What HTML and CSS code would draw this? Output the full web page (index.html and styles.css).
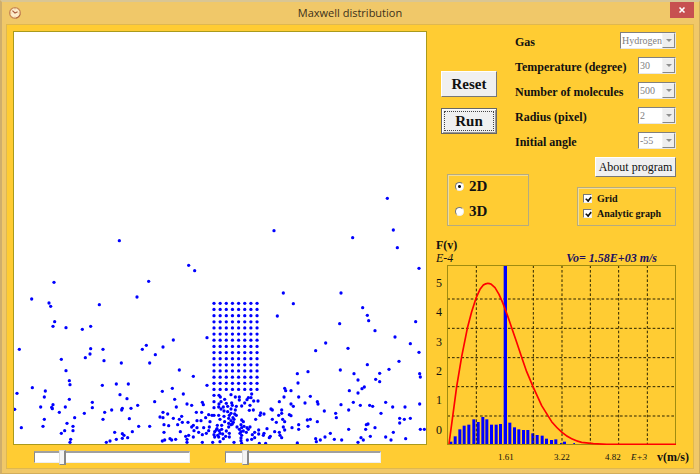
FILE: index.html
```html
<!DOCTYPE html>
<html lang="en">
<head>
<meta charset="utf-8">
<title>Maxwell distribution</title>
<link rel="stylesheet" href="styles.css">
</head>
<body>
<div class="window">
  <header class="titlebar">
    <svg class="app-icon" viewBox="0 0 14 14" aria-hidden="true">
      <circle cx="7" cy="7" r="5.4" fill="#fdeccb" stroke="#c98a55" stroke-width="1.3"/>
      <path d="M4.4 4.6 7 7l2.6-1.2" fill="none" stroke="#a85a3c" stroke-width="1.1"/>
      <path d="M7 2.3v1M7 10.7v1M2.3 7h1M10.7 7h1" stroke="#d09a60" stroke-width="1"/>
      <path d="M8 12.1a5.2 5.2 0 0 0 4-3.6" fill="none" stroke="#b0623c" stroke-width="1"/>
    </svg>
    <h1 class="title">Maxwell distribution</h1>
    <button class="close" type="button" aria-label="Close">
      <svg viewBox="0 0 8 8" aria-hidden="true"><path d="M1.5 1.5l5 5M6.5 1.5l-5 5" stroke="#fff" stroke-width="1.6"/></svg>
    </button>
  </header>

  <main class="content">
    <section class="simulation">
      <svg class="vessel" id="vessel" viewBox="42 96 1236 1236" role="img" aria-label="Molecules"></svg>
      <div class="sliders">
        <input type="range" min="0" max="100" value="16" aria-label="Speed">
        <input type="range" min="0" max="100" value="11" aria-label="Step">
      </div>
    </section>

    <section class="panel">
      <div class="settings">
        <div class="actions">
          <button class="btn btn-large" type="button">Reset</button>
          <button class="btn btn-large btn-default" type="button">Run</button>
        </div>
        <form class="params">
          <label for="gas">Gas</label>
          <span class="combo combo-wide"><select id="gas" disabled><option>Hydrogen</option></select><span class="arrow"></span></span>
          <label for="temp">Temperature (degree)</label>
          <span class="combo"><select id="temp" disabled><option>30</option></select><span class="arrow"></span></span>
          <label for="count">Number of molecules</label>
          <span class="combo"><select id="count" disabled><option>500</option></select><span class="arrow"></span></span>
          <label for="radius">Radius (pixel)</label>
          <span class="combo"><select id="radius" disabled><option>2</option></select><span class="arrow"></span></span>
          <label for="angle">Initial angle</label>
          <span class="combo"><select id="angle" disabled><option>-55</option></select><span class="arrow"></span></span>
        </form>
      </div>

      <div class="options">
        <div class="group modes">
          <label><input type="radio" name="mode" checked>2D</label>
          <label><input type="radio" name="mode">3D</label>
        </div>
        <div class="side">
          <button class="btn" type="button">About program</button>
          <div class="group checks">
            <label><input type="checkbox" checked>Grid</label>
            <label><input type="checkbox" checked>Analytic graph</label>
          </div>
        </div>
      </div>

      <div class="chart-head">
        <div class="axis-name"><b>F(v)</b><i>E-4</i></div>
        <div class="velocity">Vo= 1.58E+03 m/s</div>
      </div>
      <div class="chart">
        <div class="y-axis"><span>5</span><span>4</span><span>3</span><span>2</span><span>1</span><span>0</span></div>
        <svg class="plot" viewBox="51 15 687 540" role="img" aria-label="Velocity distribution">
          <g id="bars" fill="#00f"></g>
          <path d="M139 16V554M225 16V554M310 16V554M396 16V554M481 16V554M566 16V554M652 16V554M52 117H738M52 205H738M52 293H738M52 380H738M52 468H738" fill="none" stroke="#2b2300" stroke-width="3" stroke-dasharray="8 6"/>
          <rect x="221" y="17" width="10" height="537" fill="#00f"/>
          <rect x="52.5" y="16.5" width="684" height="537" fill="none" stroke="#a08c10" stroke-width="3"/>
          <path d="M57 552L68 470L80 380L95 290L112 205L125 155L139 112L150 88L160 75Q172 66 184 73L195 83L207 103L218 128L232 165L245 203L260 247L275 292L290 335L310 382L335 437L365 485Q380 503 396 517Q410 529 425 536Q440 543 455 547L490 551L530 553H738" fill="none" stroke="#f00" stroke-width="5" stroke-linejoin="round"/>
        </svg>
      </div>
      <div class="x-axis"><span>1.61</span><span>3.22</span><span>4.82</span><i>E+3</i><b>v(m/s)</b></div>
    </section>
  </main>
</div>
<script src="script.js"></script>
</body>
</html>
```
FILE: styles.css
```css
* { box-sizing: border-box; }

body {
  margin: 0;
  background: #eef0ee;
  color: #111;
  font: 12px/13px "Liberation Serif", serif;
}

.window {
  display: flex;
  flex-direction: column;
  min-height: 100vh;
  padding: 0 5px 4px 4px;
  border: 1px solid #d3ae5c;
  border-top: 2px solid #d9c694;
  border-left: 2px solid #cfae6a;
  background: #f0c869;
}

.titlebar {
  display: grid;
  grid-template-columns: 1fr auto 1fr;
  align-items: center;
  height: 22px;
}

.app-icon { width: 14px; height: 14px; margin-left: 2px; }

.title {
  margin: 0;
  color: #3c301a;
  font: 11px/16px "Open Sans", sans-serif;
}

.close {
  justify-self: end;
  align-self: start;
  display: flex;
  align-items: center;
  justify-content: center;
  width: 24px;
  height: 16px;
  padding: 0;
  border: 0;
  background: #c75050;
}

.close svg { width: 8px; height: 8px; }

.content {
  flex: 1;
  display: grid;
  grid-template-columns: 1fr 240px;
  gap: 9px;
  align-items: start;
  padding: 6px 17px 3px 6px;
  border: 1px solid #dfb850;
  background: #fc3;
}

.vessel {
  display: block;
  width: 100%;
  border: 1px solid #aa9a1c;
  background: #fff;
}

.sliders {
  display: flex;
  gap: 35px;
  padding: 4px 46px 0 21px;
}

.sliders input {
  flex: 1;
  min-width: 0;
  height: 15px;
  margin: 0;
  appearance: none;
  background: none;
}

.sliders input::-webkit-slider-runnable-track {
  height: 12px;
  border: 1px solid #eee;
  border-top: 2px solid #a0a0a0;
  border-left-color: #888;
  background: #fff;
}

.sliders input::-webkit-slider-thumb {
  appearance: none;
  width: 7px;
  height: 15px;
  margin-top: -3px;
  border: 1px solid #ddd;
  border-right: 2px solid #888;
  border-bottom-color: #888;
  background: #f4f4f4;
}

.panel { padding-top: 1px; }

.settings {
  display: flex;
  gap: 18px;
  padding-left: 5px;
}

.actions {
  display: flex;
  flex-direction: column;
  gap: 11px;
  padding-top: 39px;
}

.btn {
  height: 20px;
  padding: 0;
  border: 1px solid;
  border-color: #fff #777 #777 #fff;
  background: #f0f0f0;
  color: #111;
  font: 12px/14px "Liberation Serif", serif;
}

.btn-large {
  width: 56px;
  height: 26px;
  font-size: 15px;
  font-weight: bold;
}

.btn-default {
  border-color: #666;
  outline: 1px dotted #444;
  outline-offset: -4px;
  box-shadow: inset 1px 1px #fff, inset -1px -1px #999;
}

.params {
  flex: 1;
  display: grid;
  grid-template-columns: 1fr auto;
  row-gap: 8px;
  align-items: center;
}

.params label {
  grid-column: 1;
  height: 17px;
  margin-right: -20px;
  font-weight: bold;
  line-height: 20px;
  white-space: nowrap;
}

.combo {
  grid-column: 2;
  justify-self: end;
  display: flex;
  width: 38px;
  height: 17px;
  border: 1px solid;
  border-color: #808080 #e8e8e8 #e8e8e8 #808080;
  background: #fff;
}

.combo-wide { width: 56px; margin-left: -18px; }

.combo select {
  flex: 1;
  min-width: 0;
  padding: 0 0 0 1px;
  border: 0;
  appearance: none;
  background: none;
  color: #808080;
  opacity: 1;
  font: 10px/15px "Liberation Serif", serif;
}

.arrow {
  display: flex;
  align-items: center;
  justify-content: center;
  width: 13px;
  border: 1px solid;
  border-color: #f4f4f4 #888 #888 #f4f4f4;
  background: #eee;
}

.arrow::before {
  content: "";
  border: 3px solid transparent;
  border-top-color: #909090;
  border-bottom: 0;
}

.options {
  display: flex;
  justify-content: space-between;
  align-items: flex-end;
  margin-top: 8px;
  padding-left: 11px;
}

.side {
  display: flex;
  flex-direction: column;
  align-items: flex-end;
  gap: 10px;
}

.side .btn { width: 81px; }

.group {
  display: flex;
  flex-direction: column;
  border: 1px solid #b5ab80;
  box-shadow: inset 1px 1px #f2dc98;
}

.group label { display: flex; align-items: center; font-weight: bold; }

.group input {
  flex: none;
  appearance: none;
  width: 9px;
  height: 9px;
  margin: 0;
  border: 1px solid;
  border-color: #777 #eee #eee #777;
  background: #fff;
}

.modes {
  gap: 9px;
  width: 82px;
  height: 52px;
  padding: 3px 0 0 7px;
  font-size: 15px;
  line-height: 16px;
}

.modes label { gap: 5px; }
.modes input { border-radius: 50%; }
.modes input:checked { background: radial-gradient(circle, #111 0 1px, #fff 2px); }

.checks {
  gap: 2px;
  width: 99px;
  height: 39px;
  padding: 4px 0 0 5px;
  font-size: 10px;
}

.checks label { gap: 5px; white-space: nowrap; }

.checks input { position: relative; }

.checks input:checked::before {
  content: "";
  position: absolute;
  left: 2px;
  top: 0;
  width: 3px;
  height: 5px;
  border: solid #111;
  border-width: 0 2px 2px 0;
  box-sizing: content-box;
  transform: rotate(40deg) scale(.8);
}

.chart-head {
  display: flex;
  justify-content: space-between;
  align-items: flex-end;
  margin-top: 13px;
}

.axis-name { display: flex; flex-direction: column; }

.velocity {
  margin-right: 19px;
  color: #201060;
  font-weight: bold;
  font-style: italic;
}

.chart {
  display: grid;
  grid-template-columns: 11px 1fr;
}

.y-axis {
  display: flex;
  flex-direction: column;
  padding-top: 4px;
}

.y-axis span { flex: 1; display: flex; align-items: center; }

.plot { display: block; width: 100%; }

.x-axis {
  display: grid;
  grid-template-columns: 56fr 51fr 26fr 26fr 32fr;
  align-items: center;
  margin: 6px -13px 0 62px;
  font-size: 9px;
  white-space: nowrap;
}

.x-axis b { font-size: 12px; }
```
FILE: script.js
```js
const SVG = "http://www.w3.org/2000/svg";

function add(parent, name, attrs) {
  const node = document.createElementNS(SVG, name);
  for (const key in attrs) node.setAttribute(key, attrs[key]);
  parent.appendChild(node);
}

// Molecule positions, three units per pixel, grouped by region origin.
const regions = [
  { x: 0, y: 540, at: "1162,55 822,152 1180,150 1058,173 1192,203 358,182 566,256 584,272 1257,265 162,307 446,304 850,339 1023,339 411,351 95,357" },
  { x: 0, y: 810, at: "147,99 152,109 298,104 164,155 159,169 198,173 247,178 272,169 58,238 272,236 270,252 256,263 309,238 312,272 364,279 427,238 439,226 449,279 184,268 198,302 208,332 210,344 97,353 51,370 136,363 133,381 307,346 349,342 385,342 360,374 381,386 208,388 122,411 159,404 155,412 157,416 196,411 178,427 44,418 277,397 277,413 253,430 224,443 201,460 314,427 335,420 367,415 365,420 393,415 413,406 133,448 129,469 64,473 219,469 219,482 194,482 184,490 212,508 210,517 309,448 388,446 416,469 449,469 344,487 367,491 372,496 367,505 349,508 330,513 319,517 383,503 397,485" },
  { x: 390, y: 870, at: "130,150 99,171 76,194 231,143 148,240 190,259 231,286 127,295 97,304 160,312 134,328 74,335 139,351 171,342 185,346 217,337 220,344 99,367 113,372 90,381 99,383 130,385 155,379 148,388 157,397 143,404 102,404 116,407 102,427 151,425 174,397 199,367 215,367 227,383 236,374 201,392 213,392 185,411 190,406 201,413 221,413 238,411 240,395 192,422 206,427 217,434 229,430 236,422 167,439 176,436 190,441 171,448 171,457 97,453 104,450 120,446 125,450 137,448 217,457 248,457 252,316 252,335 252,353 252,376 267,316 271,321 303,314 316,321 328,321 328,330 284,328 273,335 267,342 289,340 305,339 307,346 293,349 280,351 266,351 355,323 365,312 363,323 351,329 371,333 384,333 344,339 360,346 335,348 358,361 370,360 319,349 316,360 303,357 273,357 282,363 293,365 303,370 314,372 319,376 309,383 312,388 266,376 246,376 282,379 298,376 296,385 303,392 310,397 307,402 296,400 284,395 270,388 335,390 340,395 333,404 377,388 392,369 402,372 390,376 275,406 262,406 275,418 261,416 268,422 254,425 270,430 252,434 263,436 254,441 266,441 270,455 259,420 278,432 289,423 298,430 287,439 280,446 296,411 303,404 321,411 328,418 333,425 335,413 342,409 351,413 355,418 360,411 340,423 330,430 335,436 333,444 333,452 335,460 312,457 298,441 349,427 367,434 374,427 386,420 386,432 374,443 365,448 352,450 388,460 407,460 400,436 402,430 411,416 418,443" },
  { x: 810, y: 870, at: "70,41 22,78 278,53 292,76 296,92 209,101 437,95 315,122 375,141 421,161 447,187 167,159 137,182 234,175 387,214 292,224 357,238 329,250 317,268 329,275 211,240 252,251 264,270 283,291 276,296 238,302 264,309 449,251 451,261 82,251 114,245 84,279 44,295 47,302 63,302 42,321 86,321 121,319 28,335 105,339 142,335 144,342 63,342 70,349 3,357 7,360 35,360 35,370 26,376 58,374 63,377 7,388 19,397 38,388 44,395 112,390 121,388 142,395 163,363 197,370 199,383 213,344 250,337 236,360 271,346 299,346 308,349 347,337 368,351 405,351 333,370 449,342 389,385 403,388 421,385 389,399 294,402 289,404 287,418 315,413 236,418 86,404 86,418 114,409 40,411 44,420 66,413 14,425 28,427 30,436 35,443 1,439 451,418 463,418 370,427 347,441 363,450 407,446 301,439 273,443 280,450 264,457 215,450 193,448 181,430 165,441 151,450 137,446 139,455 82,459" }
];

const vessel = document.getElementById("vessel");
function molecule(cx, cy) {
  add(vessel, "circle", { cx, cy, r: 4.9, fill: "#00f" });
}

for (const region of regions) {
  for (const pair of region.at.split(" ")) {
    const [x, y] = pair.split(",").map(Number);
    molecule(region.x + x, region.y + y);
  }
}

// Molecules still waiting in the starting block.
for (let row = 0; row < 15; row++) {
  for (let col = 0; col < 8; col++) {
    molecule(642 + col * 18.45, 910 + row * 18.45);
  }
}

// Histogram: left edge and top of each bar.
const bars = [[58,545],[71,529],[85,508],[98,497],[112,494],[127,478],[140,486],[154,471],[166,478],[180,494],[194,494],[207,492],[235,488],[249,502],[262,508],[276,510],[289,510],[304,520],[317,525],[332,527],[345,536],[360,540],[373,538],[390,549],[399,545],[430,549]];
const barGroup = document.getElementById("bars");
for (const [x, y] of bars) {
  add(barGroup, "rect", { x, y, width: x === 390 || x === 430 ? 5 : 9, height: 554 - y });
}
```
